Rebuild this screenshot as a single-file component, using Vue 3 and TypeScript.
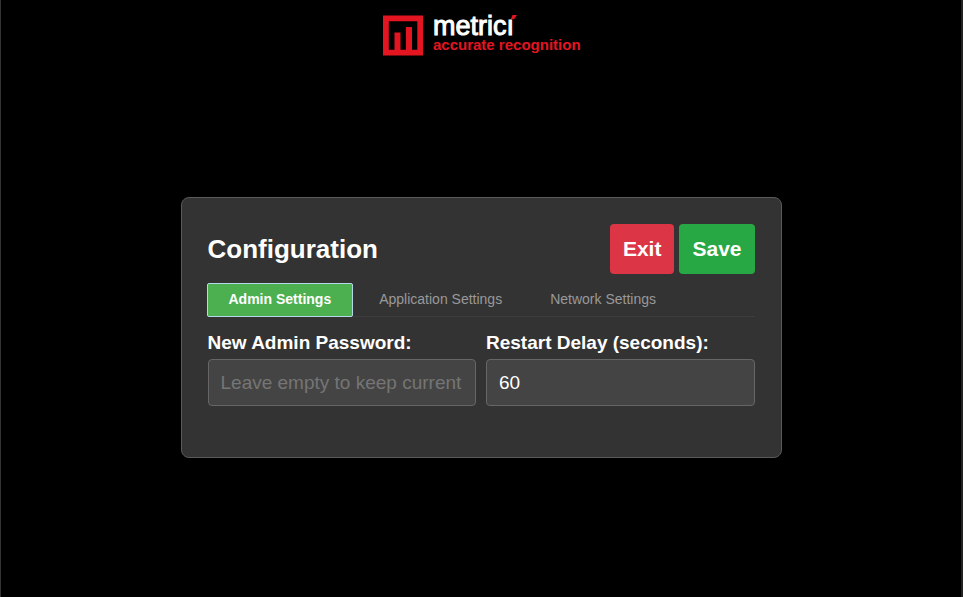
<script setup lang="ts">
import { ref } from 'vue'

interface Tab {
  id: string
  label: string
}

const tabs: Tab[] = [
  { id: 'admin', label: 'Admin Settings' },
  { id: 'application', label: 'Application Settings' },
  { id: 'network', label: 'Network Settings' },
]

const activeTab = ref('admin')
const password = ref('')
const restartDelay = ref('60')
</script>

<template>
  <div class="page">
    <header class="brand">
      <svg class="logo" width="200" height="50" viewBox="-2 -8 200 50" role="img" aria-label="metrici accurate recognition">
        <path fill="#e31521" fill-rule="evenodd" d="M0 .5H40V40.500H0ZM5.800 6.300V34.700H11.500V17.500H17.500V34.700H22.900V12H29V34.700H34.300V6.300Z" />
        <text class="name" x="50" y="20">metricı</text>
        <path fill="#e31521" d="M129.500 0H134L131 4.200H127.800Z" />
        <text class="tagline" x="50" y="35">accurate recognition</text>
      </svg>
    </header>

    <main class="stage">
      <form class="card" @submit.prevent>
        <div class="card-head">
          <h1>Configuration</h1>
          <div class="actions">
            <button type="button" class="btn exit">Exit</button>
            <button type="submit" class="btn save">Save</button>
          </div>
        </div>

        <div class="tabs" role="tablist">
          <button
            v-for="tab in tabs"
            :key="tab.id"
            type="button"
            role="tab"
            class="tab"
            :class="{ active: tab.id === activeTab }"
            :aria-selected="tab.id === activeTab"
            @click="activeTab = tab.id"
          >
            {{ tab.label }}
          </button>
        </div>

        <div class="fields">
          <div class="field">
            <label for="password">New Admin Password:</label>
            <input id="password" v-model="password" type="password" placeholder="Leave empty to keep current" />
          </div>
          <div class="field">
            <label for="delay">Restart Delay (seconds):</label>
            <input id="delay" v-model="restartDelay" type="text" inputmode="numeric" />
          </div>
        </div>
      </form>
    </main>
  </div>
</template>

<style>
body {
  background: #000;
}
</style>

<style scoped>
.page {
  box-sizing: border-box;
  min-height: 100vh;
  display: flex;
  flex-direction: column;
  background: #000;
  border-left: 1px solid #333;
  border-right: 2px solid #222;
  color: #fff;
  font-family: "Liberation Sans", Arial, sans-serif;
}

.brand {
  display: flex;
  justify-content: center;
  padding: 7px 0 1px;
}

.logo {
  display: block;
}

.name {
  fill: #fff;
  stroke: #fff;
  stroke-width: 1;
  font-size: 27px;
}

.tagline {
  fill: #e31521;
  font-size: 15px;
  font-weight: 700;
}

.stage {
  flex: 1;
  display: flex;
  align-items: center;
  justify-content: center;
}

.card {
  box-sizing: border-box;
  width: 100%;
  max-width: 601px;
  padding: 26px 26px 51px;
  background: #333;
  border: 1px solid #5a5a5a;
  border-radius: 8px;
}

.card-head {
  display: flex;
  align-items: center;
  justify-content: space-between;
}

h1 {
  margin: 0;
  font-size: 26px;
  line-height: 30px;
}

.actions {
  display: flex;
  gap: 5px;
}

.btn {
  padding: 13px;
  border: 0;
  border-radius: 4px;
  color: #fff;
  font: inherit;
  font-size: 21px;
  font-weight: 700;
  line-height: 24px;
  cursor: pointer;
}

.exit {
  background: #dc3545;
}

.save {
  background: #28a745;
}

.tabs {
  display: flex;
  gap: 4px;
  margin-top: 9px;
  margin-left: -1px;
  border-bottom: 1px solid #3d3d3d;
}

.tab {
  margin-bottom: -1px;
  padding: 7px 21px 9px;
  border: 1px solid transparent;
  border-radius: 2px;
  background: transparent;
  color: #999;
  font: inherit;
  font-size: 14px;
  line-height: 16px;
  cursor: pointer;
}

.tab.active {
  background: #4caf50;
  border-color: #b5d9e8;
  color: #fff;
  font-weight: 700;
}

.fields {
  display: grid;
  grid-template-columns: 1fr 1fr;
  gap: 10px;
  margin-top: 15px;
}

.field {
  display: flex;
  flex-direction: column;
  gap: 5px;
  min-width: 0;
}

label {
  font-size: 19px;
  font-weight: 700;
  line-height: 22px;
}

input {
  box-sizing: border-box;
  width: 100%;
  height: 47px;
  padding: 0 12px;
  border: 1px solid #666;
  border-radius: 4px;
  background: #444;
  color: #fff;
  font: inherit;
  font-size: 19px;
}

input::placeholder {
  color: #757575;
}
</style>
